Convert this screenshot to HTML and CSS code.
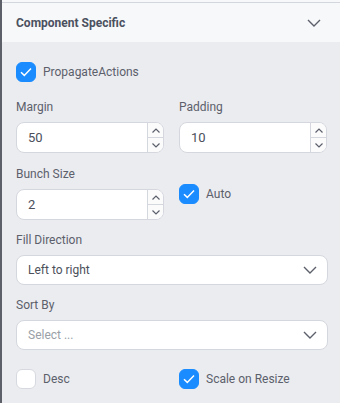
FILE: index.html
```html
<!DOCTYPE html>
<html>
<head>
    <meta charset="UTF-8">
    <meta name="viewport" content="width=device-width, initial-scale=1.0">
    <title>Component Specific</title>
    <link rel="stylesheet" href="styles.css">
</head>
<body>
    <div class="panel">
        <div class="top-strip"></div>
        <div class="header">
            <span class="header-title">Component Specific</span>
            <svg class="chevron" width="14" height="8" viewBox="0 0 14 8"><path d="M1 1l6 6 6-6" fill="none" stroke="#5b606b" stroke-width="1.4"/></svg>
        </div>

        <div class="content">
            <label class="check-row">
                <span class="check checked"><svg width="12" height="10" viewBox="0 0 12 10"><path d="M1 5.2l3.3 3.2L11 1.5" fill="none" stroke="#fff" stroke-width="1.5"/></svg></span>
                <span class="check-label">PropagateActions</span>
            </label>

            <div class="grid">
                <div class="field">
                    <div class="field-label">Margin</div>
                    <div class="number">
                        <span class="number-value">50</span>
                        <div class="spin">
                            <span class="spin-btn"><svg width="8" height="5" viewBox="0 0 8 5"><path d="M0.5 4.5L4 1l3.5 3.5" fill="none" stroke="#5b606b" stroke-width="1.2"/></svg></span>
                            <span class="spin-btn"><svg width="8" height="5" viewBox="0 0 8 5"><path d="M0.5 0.5L4 4l3.5-3.5" fill="none" stroke="#5b606b" stroke-width="1.2"/></svg></span>
                        </div>
                    </div>
                </div>
                <div class="field">
                    <div class="field-label">Padding</div>
                    <div class="number">
                        <span class="number-value">10</span>
                        <div class="spin">
                            <span class="spin-btn"><svg width="8" height="5" viewBox="0 0 8 5"><path d="M0.5 4.5L4 1l3.5 3.5" fill="none" stroke="#5b606b" stroke-width="1.2"/></svg></span>
                            <span class="spin-btn"><svg width="8" height="5" viewBox="0 0 8 5"><path d="M0.5 0.5L4 4l3.5-3.5" fill="none" stroke="#5b606b" stroke-width="1.2"/></svg></span>
                        </div>
                    </div>
                </div>
                <div class="field">
                    <div class="field-label">Bunch Size</div>
                    <div class="number">
                        <span class="number-value">2</span>
                        <div class="spin">
                            <span class="spin-btn"><svg width="8" height="5" viewBox="0 0 8 5"><path d="M0.5 4.5L4 1l3.5 3.5" fill="none" stroke="#5b606b" stroke-width="1.2"/></svg></span>
                            <span class="spin-btn"><svg width="8" height="5" viewBox="0 0 8 5"><path d="M0.5 0.5L4 4l3.5-3.5" fill="none" stroke="#5b606b" stroke-width="1.2"/></svg></span>
                        </div>
                    </div>
                </div>
                <div class="field">
                    <label class="check-row auto-row">
                        <span class="check checked"><svg width="12" height="10" viewBox="0 0 12 10"><path d="M1 5.2l3.3 3.2L11 1.5" fill="none" stroke="#fff" stroke-width="1.5"/></svg></span>
                        <span class="check-label">Auto</span>
                    </label>
                </div>
            </div>

            <div class="field wide">
                <div class="field-label">Fill Direction</div>
                <div class="select">
                    <span class="select-value">Left to right</span>
                    <svg width="14" height="8" viewBox="0 0 14 8"><path d="M1 1l6 6 6-6" fill="none" stroke="#5b606b" stroke-width="1.4"/></svg>
                </div>
            </div>

            <div class="field wide">
                <div class="field-label">Sort By</div>
                <div class="select">
                    <span class="select-value placeholder">Select ...</span>
                    <svg width="14" height="8" viewBox="0 0 14 8"><path d="M1 1l6 6 6-6" fill="none" stroke="#5b606b" stroke-width="1.4"/></svg>
                </div>
            </div>

            <div class="grid bottom">
                <label class="check-row">
                    <span class="check"></span>
                    <span class="check-label">Desc</span>
                </label>
                <label class="check-row">
                    <span class="check checked"><svg width="12" height="10" viewBox="0 0 12 10"><path d="M1 5.2l3.3 3.2L11 1.5" fill="none" stroke="#fff" stroke-width="1.5"/></svg></span>
                    <span class="check-label">Scale on Resize</span>
                </label>
            </div>
        </div>
    </div>
</body>
</html>
```

FILE: styles.css
```css
* {
    box-sizing: border-box;
    margin: 0;
    padding: 0;
}

body, html {
    width: 100%;
    height: 100%;
    overflow: hidden;
    background-color: #ebecf0;
    font-family: Roboto, "Liberation Sans", sans-serif;
}

.panel {
    height: 100%;
    border-left: 2px solid #5d6068;
}

.top-strip {
    height: 3px;
    background-color: #f7f8fa;
    border-bottom: 1px solid #d3d6dd;
}

.header {
    height: 39px;
    display: flex;
    align-items: center;
    justify-content: space-between;
    padding: 0 19px 0 14px;
    background-color: #f7f8fa;
}

.header-title {
    font-size: 12px;
    font-weight: 700;
    color: #4b5160;
}

.content {
    padding: 20px 12px 0 14px;
}

.check-row {
    display: flex;
    align-items: center;
    gap: 7px;
    height: 20px;
}

.check {
    width: 20px;
    height: 20px;
    border-radius: 6px;
    background-color: #fff;
    border: 1px solid #d6d9df;
    display: flex;
    align-items: center;
    justify-content: center;
}

.check.checked {
    background-color: #1a8cff;
    border-color: #1a8cff;
}

.check-label {
    font-size: 12px;
    color: #5b606b;
}

.grid {
    display: grid;
    grid-template-columns: 148px 148px;
    column-gap: 15px;
    row-gap: 13px;
    margin-top: 17px;
}

.field-label {
    font-size: 12px;
    line-height: 16px;
    color: #5b606b;
    margin-bottom: 7px;
}

.number {
    display: flex;
    height: 31px;
    background-color: #fff;
    border: 1px solid #d4d7de;
    border-radius: 8px;
    overflow: hidden;
}

.number-value {
    flex: 1;
    display: flex;
    align-items: center;
    padding-left: 11px;
    font-size: 13px;
    color: #4b505b;
}

.spin {
    width: 16px;
    display: flex;
    flex-direction: column;
    border-left: 1px solid #d4d7de;
    background-color: #fbfbfc;
}

.spin-btn {
    flex: 1;
    display: flex;
    align-items: center;
    justify-content: center;
}

.spin-btn + .spin-btn {
    border-top: 1px solid #d4d7de;
}

.auto-row {
    margin-top: 18px;
}

.wide {
    margin-top: 12px;
}

.select {
    height: 30px;
    display: flex;
    align-items: center;
    justify-content: space-between;
    padding: 0 10px 0 11px;
    background-color: #fff;
    border: 1px solid #d4d7de;
    border-radius: 8px;
}

.select-value {
    font-size: 12px;
    color: #4b505b;
}

.select-value.placeholder {
    color: #9a9fa8;
}

.bottom {
    margin-top: 19px;
}
```
